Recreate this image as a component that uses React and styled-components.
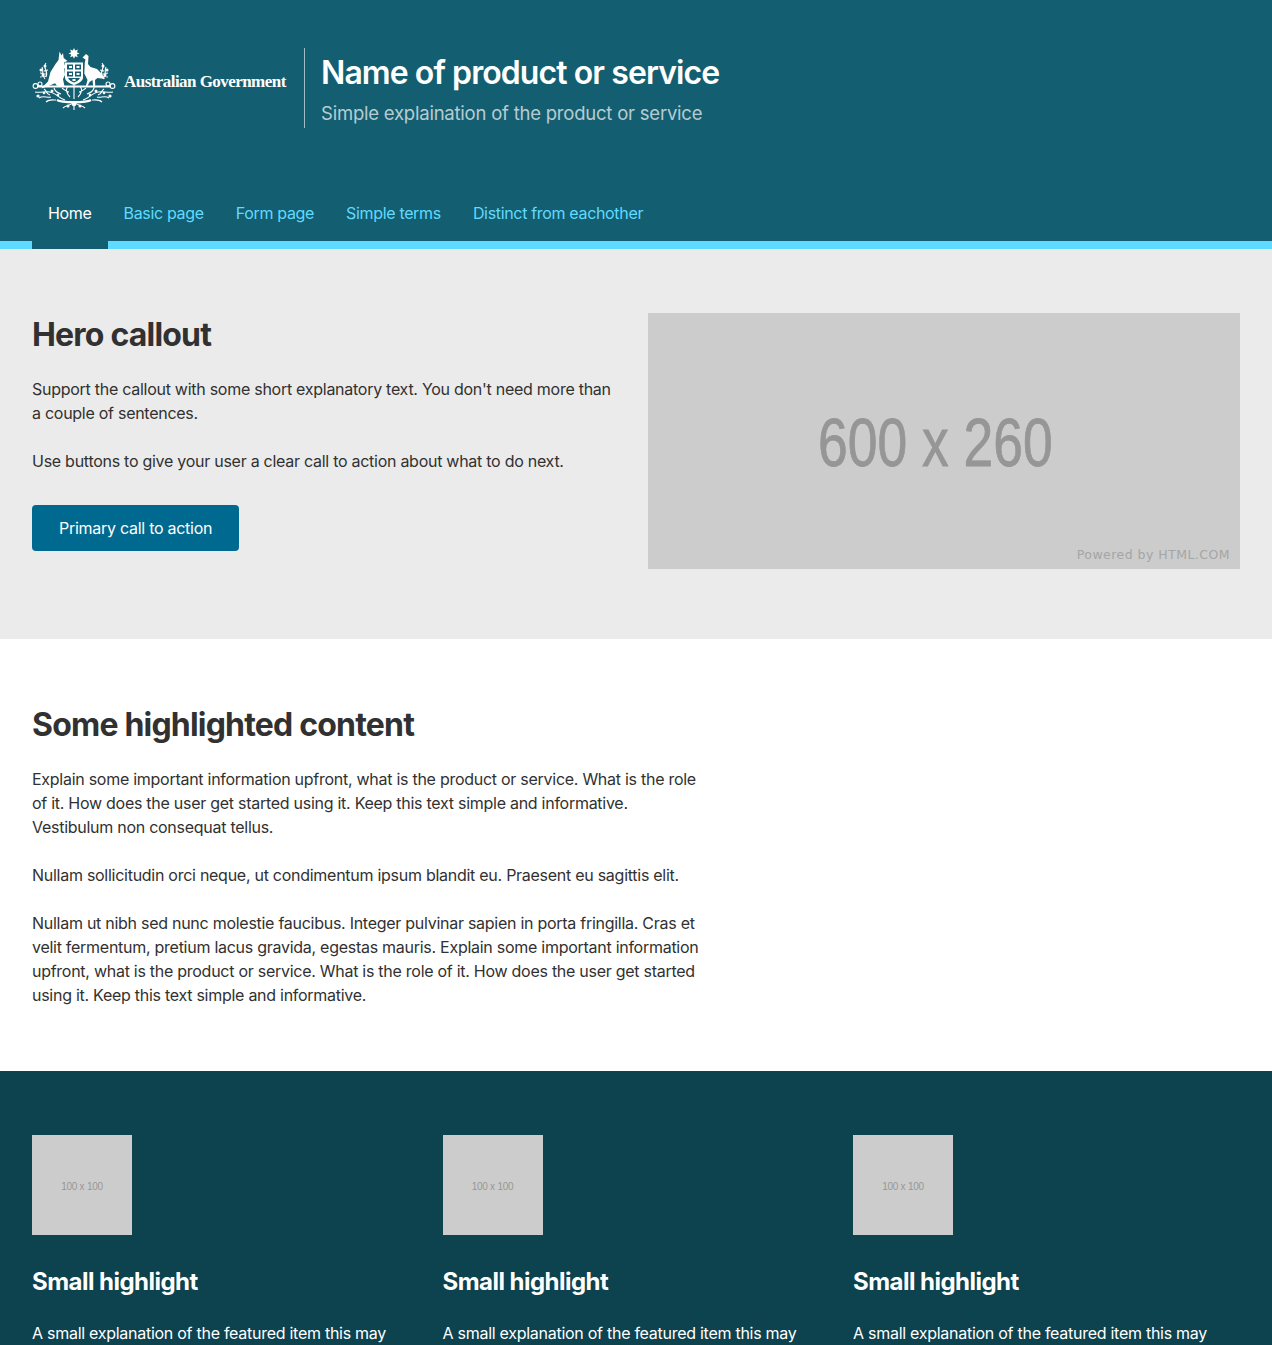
import React from "react";
import styled, { createGlobalStyle } from "styled-components";

const GlobalStyle = createGlobalStyle`
  html, body {
    margin: 0;
    height: 100%;
    overflow: hidden;
    background: #fff;
  }
  body {
    font-family: Inter, "Liberation Sans", sans-serif;
    font-size: 16px;
    line-height: 24px;
    letter-spacing: -0.27px;
    color: #313131;
  }
  p { margin: 0; }
`;

const Page = styled.div`
  height: 1345px;
  overflow: hidden;
`;

const Header = styled.header`
  background: #135e70;
  border-bottom: 8px solid #61daff;
  padding: 48px 32px 0;
  display: flex;
  flex-direction: column;
  justify-content: space-between;
  height: 193px;
`;

const Brand = styled.div`
  display: flex;
  align-items: flex-start;
`;

const Logo = styled.div`
  display: flex;
  align-items: flex-start;
  width: 254px;
  padding-right: 18px;
  height: 80px;
  border-right: 1px solid rgba(255, 255, 255, 0.6);
`;

const LogoText = styled.span`
  font-family: "Liberation Serif", serif;
  font-weight: 700;
  font-size: 17px;
  line-height: 20px;
  color: #fff;
  white-space: nowrap;
  margin: 24px 0 0 8px;
  letter-spacing: -0.55px;
`;

const Titles = styled.div`
  padding-left: 16px;
`;

const Title = styled.div`
  font-size: 32px;
  line-height: 40px;
  font-weight: 600;
  letter-spacing: -0.92px;
  color: #fff;
  margin-top: 5px;
`;

const Subtitle = styled.div`
  font-size: 18.5px;
  line-height: 32px;
  letter-spacing: -0.22px;
  color: rgba(255, 255, 255, 0.7);
  margin-top: 4px;
`;

const Nav = styled.nav`
  display: flex;
  margin-bottom: -8px;
  letter-spacing: -0.33px;
`;

const NavItem = styled.a`
  padding: 16px 16px 24px;
  color: ${(p) => (p.$active ? "#fff" : "#61daff")};
  background: #135e70;
  ${(p) => (p.$active ? "" : "margin-bottom: 8px; padding-bottom: 16px;")}
`;

const Hero = styled.section`
  background: #ebebeb;
  padding: 66px 32px 70px;
  display: flex;
  gap: 32px;
`;

const HeroText = styled.div`
  flex: 1;
`;

const Heading = styled.h2`
  font-size: 32px;
  line-height: 40px;
  font-weight: 700;
  letter-spacing: -0.8px;
  margin: 0 0 22px;
  color: #313131;
`;

const Para = styled.p`
  margin-bottom: 24px;
  &:last-child { margin-bottom: 0; }
`;

const Button = styled.a`
  display: inline-block;
  background: #00698f;
  color: #fff;
  border-radius: 4px;
  padding: 11px 27px;
  margin-top: 8px;
`;

const HeroImage = styled.div`
  position: relative;
  flex: none;
  width: 592px;
  height: 256px;
  margin-top: -2px;
  background: #ccc;
  overflow: hidden;
  display: flex;
  align-items: center;
  justify-content: center;
  padding-right: 17px;
  box-sizing: border-box;
`;

const HeroImageLabel = styled.span`
  font-family: "Liberation Sans", sans-serif;
  font-size: 68px;
  line-height: 1;
  letter-spacing: 0;
  color: #969696;
  white-space: pre;
  transform: scaleX(0.786);
  -webkit-text-stroke: 0.8px #969696;
  filter: blur(0.5px);
  margin-top: 2px;
`;

const Powered = styled.span`
  position: absolute;
  right: 10px;
  bottom: 4px;
  font-family: "DejaVu Sans", sans-serif;
  font-size: 12.5px;
  line-height: 20px;
  letter-spacing: 0.46px;
  color: #a5a5a5;
`;

const Highlight = styled.section`
  padding: 66px 32px 64px;
`;

const HighlightBody = styled.div`
  width: 672px;
`;

const Features = styled.section`
  background: #0d424f;
  padding: 64px 32px;
  display: grid;
  grid-template-columns: repeat(3, 378.5px);
  gap: 32px;
  color: #fff;
`;

const Thumb = styled.div`
  width: 100px;
  height: 100px;
  padding-top: 3px;
  box-sizing: border-box;
  background: #ccc;
  display: flex;
  align-items: center;
  justify-content: center;
  font-family: "Liberation Sans", sans-serif;
  font-size: 10px;
  letter-spacing: -0.25px;
  color: #979797;
  margin-bottom: 31px;
`;

const FeatureTitle = styled.h3`
  font-size: 24px;
  line-height: 32px;
  font-weight: 700;
  letter-spacing: -0.53px;
  color: #fff;
  margin: 0 0 23px;
`;

const Crest = () => (
  <svg width="84" height="62" viewBox="0 0 84 62" fill="none" style={{ flex: "none" }}>
    <path
      fill="#fff"
      d="M42 0l1.200 2.600 2.700-1-1 2.700 2.600 1.100-2.700 1.100 1 2.700-2.700-1-1.100 2.600-1.100-2.600-2.700 1 1-2.700-2.700-1.100 2.600-1.100-1-2.700 2.700 1z"
    />
    <path
      fill="#fff"
      d="M27.500 3.500l2 4 1.500-2.500.7 5 3.800 3-3.300 1.200.6 3 2.700 2-3.200 1.300.7 6.500-2 4 1.500 7.500h-7l-2.500-3.200-7.500 3.200-6.500 2 7-7 2.500-9.500 5-8 3-4z"
    />
    <path
      fill="#fff"
      d="M50.500 9.500l3.500-3.500 2.500 2-.5 8 2.500 3 6.500 2 4.500 4.500 3.500 5.500-7.500-1-2.500 2 .3 7.500h-2l-.8-7.500-3 2-2.500 5-1.300-.6 1.800-6.400-3.200-6.500.5-11 .7-3z"
    />
    <path
      fill="#fff"
      d="M33 14.500h18v15c0 3.500-4.500 6-9 7.500-4.500-1.500-9-4-9-7.500z"
    />
    <path
      fill="#135e70"
      d="M35 16.500h6v5h-6zM43 16.500h6v5h-6zM35 23.500h6v5h-6zM43 23.500h6v5h-6zM36 30h12c-1 2-3.500 3.500-6 4.500-2.500-1-5-2.500-6-4.500z"
    />
    <path
      fill="#fff"
      d="M37 18h3v2h-3zM44.500 18h3v2h-3zM37 25h3v2h-3zM44.500 25h3v2h-3zM40.500 31h3v2h-3z"
    />
    <rect x="5" y="37.500" width="74" height="2" fill="#fff" />
    <g stroke="#fff" strokeWidth="1.100" fill="none">
      <circle cx="3.500" cy="38" r="2.400" />
      <circle cx="8" cy="36" r="2" />
      <circle cx="80.500" cy="38" r="2.400" />
      <circle cx="76" cy="36" r="2" />
      <path d="M10 19c2 4-1 7 3 12M14 15c-4 5 3 8 0 14M8 25l6 1M8 29l6-1M16 22l-4 1" />
      <path d="M74 19c-2 4 1 7-3 12M70 15c4 5-3 8 0 14M76 25l-6 1M76 29l-6-1M68 22l4 1" />
      <path d="M3 44c6 1 10-1 15 0 6 1 10 7 15 8M81 44c-6 1-10-1-15 0-6 1-10 7-15 8" />
      <path d="M7 50c4-3 8 0 12-1M77 50c-4-3-8 0-12-1M14 54c3-3 7-2 10-2M70 54c-3-3-7-2-10-2" />
      <path d="M12 41c3 2 2 5 6 6M72 41c-3 2-2 5-6 6M22 40c1 4 4 5 7 6M62 40c-1 4-4 5-7 6" />
      <path d="M25 52c5 3 29 3 34 0" strokeWidth="2.400" />
      <path d="M36 38c-3 4-1 8 2 11M48 38c3 4 1 8-2 11M42 37v14M30 40c3 2 5 4 7 4M54 40c-3 2-5 4-7 4" />
      <path d="M42 54c-3 4-8 3-11 6M42 54c3 4 8 3 11 6M42 54v8" />
    </g>
    <g fill="#fff">
      <circle cx="9" cy="22" r="1.500" />
      <circle cx="13" cy="18" r="1.500" />
      <circle cx="11" cy="27" r="1.500" />
      <circle cx="75" cy="22" r="1.500" />
      <circle cx="71" cy="18" r="1.500" />
      <circle cx="73" cy="27" r="1.500" />
      <circle cx="6" cy="48" r="1.600" />
      <circle cx="78" cy="48" r="1.600" />
      <circle cx="12" cy="45" r="1.300" />
      <circle cx="72" cy="45" r="1.300" />
      <circle cx="20" cy="43" r="1.500" />
      <circle cx="64" cy="43" r="1.500" />
      <circle cx="26" cy="47" r="1.300" />
      <circle cx="58" cy="47" r="1.300" />
      <circle cx="42" cy="56" r="2.300" />
      <circle cx="36" cy="58" r="1.500" />
      <circle cx="48" cy="58" r="1.500" />
    </g>
  </svg>
);

const navItems = ["Home", "Basic page", "Form page", "Simple terms", "Distinct from eachother"];

const App = () => {
  return (
    <Page>
      <GlobalStyle />
      <Header>
        <Brand>
          <Logo>
            <Crest />
            <LogoText>Australian Government</LogoText>
          </Logo>
          <Titles>
            <Title>Name of product or service</Title>
            <Subtitle>Simple explaination of the product or service</Subtitle>
          </Titles>
        </Brand>
        <Nav>
          {navItems.map((item, i) => (
            <NavItem key={item} $active={i === 0}>
              {item}
            </NavItem>
          ))}
        </Nav>
      </Header>
      <Hero>
        <HeroText>
          <Heading>Hero callout</Heading>
          <Para>
            Support the callout with some short explanatory text. You don't need more than a couple
            of sentences.
          </Para>
          <Para>Use buttons to give your user a clear call to action about what to do next.</Para>
          <Button>Primary call to action</Button>
        </HeroText>
        <HeroImage>
          <HeroImageLabel>600 x 260</HeroImageLabel>
          <Powered>Powered by HTML.COM</Powered>
        </HeroImage>
      </Hero>
      <Highlight>
        <HighlightBody>
          <Heading>Some highlighted content</Heading>
          <Para>
            Explain some important information upfront, what is the product or service. What is the
            role of it. How does the user get started using it. Keep this text simple and
            informative. Vestibulum non consequat tellus.
          </Para>
          <Para>
            Nullam sollicitudin orci neque, ut condimentum ipsum blandit eu. Praesent eu sagittis
            elit.
          </Para>
          <Para>
            Nullam ut nibh sed nunc molestie faucibus. Integer pulvinar sapien in porta fringilla.
            Cras et velit fermentum, pretium lacus gravida, egestas mauris. Explain some important
            information upfront, what is the product or service. What is the role of it. How does
            the user get started using it. Keep this text simple and informative.
          </Para>
        </HighlightBody>
      </Highlight>
      <Features>
        {[0, 1, 2].map((i) => (
          <div key={i}>
            <Thumb>100 x 100</Thumb>
            <FeatureTitle>Small highlight</FeatureTitle>
            <p>A small explanation of the featured item this may</p>
          </div>
        ))}
      </Features>
    </Page>
  );
};

export default App;
